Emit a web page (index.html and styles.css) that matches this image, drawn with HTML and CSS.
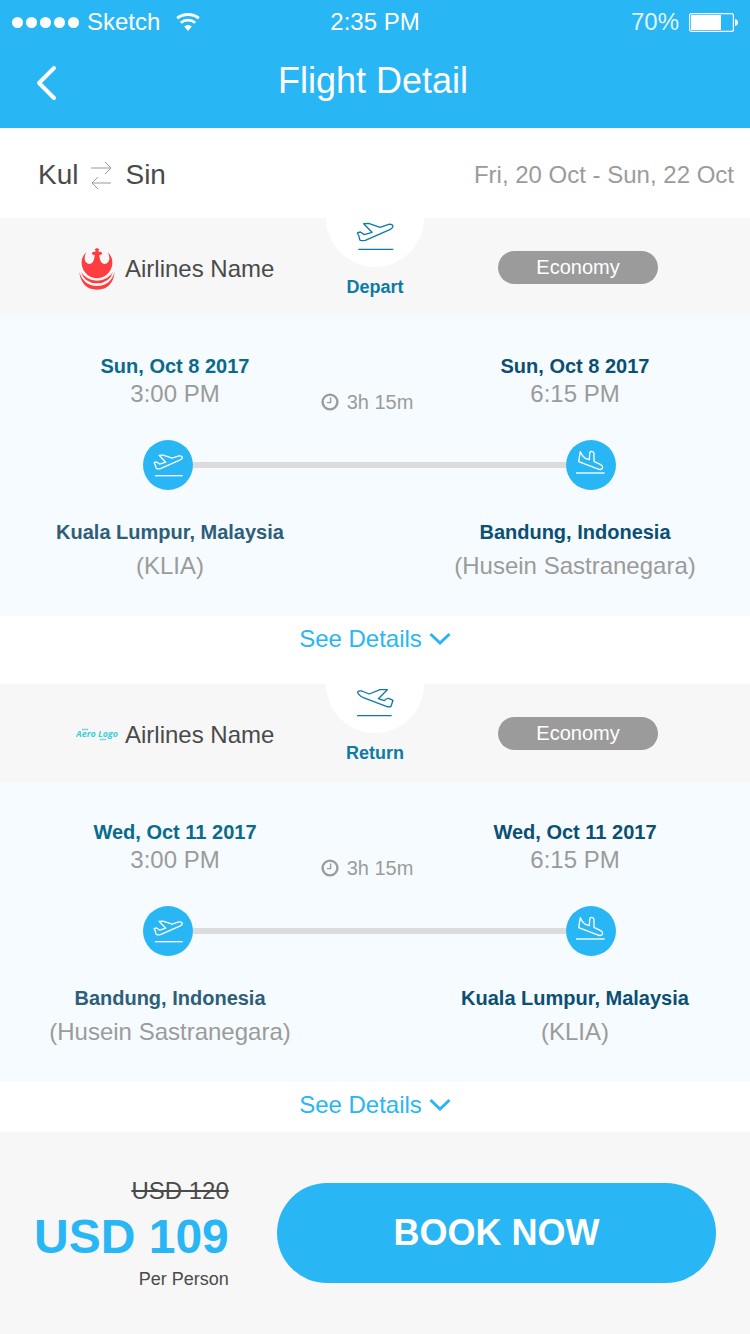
FILE: index.html
```html
<!DOCTYPE html>
<html lang="en">
<head>
<meta charset="utf-8">
<meta name="viewport" content="width=device-width, initial-scale=1">
<title>Flight Detail</title>
<link rel="stylesheet" href="styles.css">
</head>
<body>
<svg class="sprite" aria-hidden="true">
  <symbol id="takeoff" viewBox="140 36 117 87">
    <path d="M144 69L153 66L165 74L188 67L163 41L178 40L212 52L238 43Q249 42 251 48Q251 54 243 58L168 91Q152 94 151 88Q150 78 144 69Z"/>
    <path d="M147 118H252"/>
  </symbol>
  <symbol id="homeward" viewBox="138 23 117 87">
    <path d="M143 35Q147 31 155 32L178 41L210 28H232L205 55L223 61Q229 53 236 54L249 60L243 78Q238 81 229 78L160 52Q144 44 143 35Z"/>
    <path d="M141 106H245"/>
  </symbol>
  <symbol id="landing" viewBox="105 63 96 90">
    <path d="M121 68L116 98L177 121Q186 123 188 116Q188 110 182 107L162 97V74Q161 67 155 67Q149 67 149 74L148 92L136 88Q126 81 121 68Z"/>
    <path d="M108 132H194"/>
  </symbol>
  <symbol id="clock" viewBox="0 0 18 18">
    <circle cx="9" cy="9" r="7.4" stroke-width="2.4"/>
    <path d="M9.6 4.600V9.600H6" stroke-width="1.4"/>
  </symbol>
  <symbol id="chevron" viewBox="0 0 22 14">
    <path d="M1.5 2L11 11L20.5 2"/>
  </symbol>
</svg>

<header class="header">
  <div class="status">
    <div class="status-left">
      <span class="signal"><i></i><i></i><i></i><i></i><i></i></span>
      <span>Sketch</span>
      <svg class="wifi" viewBox="0 0 24 19" aria-hidden="true">
        <path d="M1.200 5.200C7.500 .4 16.500 .4 22.800 5.200" fill="none" stroke="#fff" stroke-width="3"/>
        <path d="M4.800 9.800C9 6.200 15 6.200 19.200 9.800" fill="none" stroke="#fff" stroke-width="2.800"/>
        <path d="M8.200 13.600C10.400 11.500 13.600 11.500 15.800 13.600L12 18Z" fill="#fff"/>
      </svg>
    </div>
    <time>2:35 PM</time>
    <div class="status-right">
      <span class="percent">70%</span>
      <svg class="battery" viewBox="0 0 49 19" aria-hidden="true">
        <rect x=".6" y=".6" width="43.800" height="17.800" rx="2" fill="none" stroke="#fff" stroke-width="1.200"/>
        <rect x="2" y="2" width="30" height="15" fill="#fff"/>
        <path d="M46 6Q49 6.500 49 9.500Q49 12.500 46 13Z" fill="#fff"/>
      </svg>
    </div>
  </div>
  <nav class="nav">
    <button class="back" type="button" aria-label="Back">
      <svg viewBox="0 0 24 36" aria-hidden="true"><path d="M20 3L5 18L20 33"/></svg>
    </button>
    <h1>Flight Detail</h1>
  </nav>
</header>

<main>
  <section class="route">
    <div class="cities">
      <span>Kul</span>
      <svg viewBox="0 0 21 27" aria-hidden="true"><path d="M0 6H20M14 0L20 6L14 12M20 21H1M7 15L1 21L7 27"/></svg>
      <span>Sin</span>
    </div>
    <p class="dates">Fri, 20 Oct - Sun, 22 Oct</p>
  </section>

  <div class="flights">
    <article class="flight">
      <header class="flight-head">
        <div class="airline">
          <svg class="airline-logo" viewBox="45 35 126 130" aria-hidden="true">
            <path fill="#fd3d40" d="M76 50C60 63 58 86 68 104C78 122 96 128 108 128C120 128 138 122 148 104C158 86 156 63 140 50C149 66 146 82 132 85C120 84 116 74 115 58Q122 59 124 53Q121 47 114 49L112 45L115 41L108 37L101 41L104 45L102 49Q95 47 92 53Q94 59 101 58C100 74 96 84 84 85C70 82 67 66 76 50Z"/>
            <path fill="#fd3d40" d="M60 108Q74 133 108 135Q142 133 156 108Q146 142 108 143Q70 142 60 108Z"/>
            <path fill="#fd3d40" d="M55 108Q66 149 108 151Q150 149 161 108Q156 160 108 162Q60 160 55 108Z"/>
          </svg>
          <span>Airlines Name</span>
        </div>
        <div class="direction">
          <div class="notch"><svg aria-hidden="true"><use href="#takeoff"/></svg></div>
          <h2>Depart</h2>
        </div>
        <div class="cabin"><span>Economy</span></div>
      </header>
      <div class="journey">
        <div class="row">
          <div class="stop from"><strong>Sun, Oct 8 2017</strong><span>3:00 PM</span></div>
          <div class="duration"><svg aria-hidden="true"><use href="#clock"/></svg><span>3h 15m</span></div>
          <div class="stop to"><strong>Sun, Oct 8 2017</strong><span>6:15 PM</span></div>
        </div>
        <div class="track">
          <span class="node"><svg class="icon-up" aria-hidden="true"><use href="#takeoff"/></svg></span>
          <span class="line"></span>
          <span class="node"><svg class="icon-down" aria-hidden="true"><use href="#landing"/></svg></span>
        </div>
        <div class="row">
          <div class="stop place origin"><strong>Kuala Lumpur, Malaysia</strong><span>(KLIA)</span></div>
          <div></div>
          <div class="stop place to"><strong>Bandung, Indonesia</strong><span>(Husein Sastranegara)</span></div>
        </div>
      </div>
      <button class="details" type="button">See Details <svg aria-hidden="true"><use href="#chevron"/></svg></button>
    </article>

    <article class="flight">
      <header class="flight-head">
        <div class="airline">
          <svg class="airline-logo" viewBox="0 0 42 44" role="img" aria-label="Aero Logo">
            <text x="0" y="24" class="aero">Aero Logo</text>
            <path d="M6 16.500H12M24 26.500H30" fill="none" stroke="#3fcfd5" stroke-width="1.500" stroke-dasharray="1.500 .7"/>
          </svg>
          <span>Airlines Name</span>
        </div>
        <div class="direction">
          <div class="notch"><svg aria-hidden="true"><use href="#homeward"/></svg></div>
          <h2>Return</h2>
        </div>
        <div class="cabin"><span>Economy</span></div>
      </header>
      <div class="journey">
        <div class="row">
          <div class="stop from"><strong>Wed, Oct 11 2017</strong><span>3:00 PM</span></div>
          <div class="duration"><svg aria-hidden="true"><use href="#clock"/></svg><span>3h 15m</span></div>
          <div class="stop to"><strong>Wed, Oct 11 2017</strong><span>6:15 PM</span></div>
        </div>
        <div class="track">
          <span class="node"><svg class="icon-up" aria-hidden="true"><use href="#takeoff"/></svg></span>
          <span class="line"></span>
          <span class="node"><svg class="icon-down" aria-hidden="true"><use href="#landing"/></svg></span>
        </div>
        <div class="row">
          <div class="stop place origin"><strong>Bandung, Indonesia</strong><span>(Husein Sastranegara)</span></div>
          <div></div>
          <div class="stop place to"><strong>Kuala Lumpur, Malaysia</strong><span>(KLIA)</span></div>
        </div>
      </div>
      <button class="details" type="button">See Details <svg aria-hidden="true"><use href="#chevron"/></svg></button>
    </article>
  </div>
</main>

<footer class="booking">
  <div class="price">
    <s>USD 120</s>
    <strong>USD 109</strong>
    <span>Per Person</span>
  </div>
  <button class="book" type="button">BOOK NOW</button>
</footer>
</body>
</html>
```
FILE: styles.css
```css
* {
  box-sizing: border-box;
}

body {
  margin: 0;
  background: #fff;
  color: #4a4a4a;
  font-family: "Liberation Sans", Arial, sans-serif;
  font-size: 24px;
  line-height: 28px;
}

h1, h2, p {
  margin: 0;
}

button {
  padding: 0;
  border: 0;
  background: none;
  font: inherit;
  cursor: pointer;
}

svg {
  display: block;
  flex: none;
}

.sprite {
  position: absolute;
  width: 0;
  height: 0;
}

/* Header */
.header {
  padding-bottom: 10px;
  background: #29b6f4;
  color: #fff;
}

.status,
.nav {
  display: grid;
  grid-template-columns: 1fr auto 1fr;
  align-items: center;
  padding: 0 12px;
}

.status {
  height: 44px;
}

.status-left,
.status-right {
  display: flex;
  align-items: center;
}

.status-left {
  gap: 8px;
}

.status-right {
  justify-content: flex-end;
  gap: 10px;
}

.signal {
  display: flex;
  gap: 3px;
}

.signal i {
  width: 11px;
  height: 11px;
  border-radius: 50%;
  background: #fff;
}

.wifi {
  width: 24px;
  height: 19px;
  margin-left: 8px;
}

.percent {
  opacity: 0.85;
}

.battery {
  width: 49px;
  height: 19px;
}

.nav {
  height: 74px;
  padding: 0 38px 0 34px;
}

.nav h1 {
  font-size: 36px;
  font-weight: 400;
  line-height: 44px;
}

.back {
  width: 24px;
  padding-top: 4px;
}

.back svg {
  width: 24px;
  height: 36px;
  fill: none;
  stroke: #fff;
  stroke-width: 4;
  stroke-linecap: round;
  stroke-linejoin: round;
}

/* Route summary */
.route {
  display: flex;
  align-items: center;
  justify-content: space-between;
  height: 90px;
  padding: 4px 16px 0 38px;
}

.cities {
  display: flex;
  align-items: center;
  gap: 13px;
  font-size: 28px;
}

.cities svg {
  width: 21px;
  height: 27px;
  fill: none;
  stroke: #9b9b9b;
}

.dates {
  color: #9b9b9b;
}

/* Flights */
.flights {
  display: grid;
  gap: 22px;
  padding-bottom: 4px;
}

.flight-head {
  display: grid;
  grid-template-columns: 1fr 98px 1fr;
  min-height: 98px;
  background: #f7f7f7;
}

.airline {
  display: flex;
  align-items: center;
  gap: 7px;
  padding: 4px 0 0 76px;
}

.airline-logo {
  width: 42px;
  height: 44px;
}

.aero {
  fill: #3fcfd5;
  font: italic 700 9px "Open Sans", sans-serif;
}

.direction {
  display: flex;
  flex-direction: column;
  align-items: center;
  gap: 8px;
}

.notch {
  display: flex;
  justify-content: center;
  width: 98px;
  height: 49px;
  padding-top: 4px;
  border-radius: 0 0 49px 49px;
  background: #fff;
}

.notch svg {
  width: 39px;
  height: 29px;
  fill: none;
  stroke: #0e7aa6;
  stroke-width: 4;
  stroke-linejoin: round;
}

.direction h2 {
  color: #0e7aa6;
  font-size: 18px;
  line-height: 24px;
}

.cabin {
  display: flex;
  align-items: center;
  padding-left: 74px;
}

.cabin span {
  width: 160px;
  border-radius: 17px;
  background: #9b9b9b;
  color: #fff;
  font-size: 20px;
  line-height: 33px;
  text-align: center;
}

.journey {
  display: grid;
  gap: 24px;
  padding: 36px 0 34px;
  background: #f5fbfe;
}

.row {
  display: grid;
  grid-template-columns: 27fr 13fr 27fr;
  padding: 0 40px;
}

.stop {
  display: flex;
  flex-direction: column;
  align-items: center;
  color: #9b9b9b;
  white-space: nowrap;
}

.stop strong {
  font-size: 20px;
}

.from strong {
  color: #0a6a8a;
}

.to strong {
  color: #0b4f72;
}

.origin {
  padding-right: 10px;
}

.origin strong {
  color: #2f5f78;
}

.place strong {
  line-height: 36px;
}

.place span {
  line-height: 32px;
}

.duration {
  display: flex;
  align-items: center;
  justify-content: center;
  gap: 8px;
  padding: 36px 16px 0 0;
  color: #9b9b9b;
  font-size: 20px;
  white-space: nowrap;
}

.duration svg {
  width: 18px;
  height: 18px;
  fill: none;
  stroke: #9b9b9b;
}

.track {
  display: flex;
  align-items: center;
  padding: 0 134px 0 143px;
}

.node {
  display: flex;
  align-items: center;
  justify-content: center;
  width: 50px;
  height: 50px;
  border-radius: 50%;
  background: #29b6f4;
}

.node svg {
  fill: none;
  stroke: #fff;
  stroke-width: 4;
  stroke-linejoin: round;
}

.node .icon-up {
  width: 31px;
  height: 23px;
  stroke-width: 5;
}

.icon-down {
  width: 32px;
  height: 30px;
}

.line {
  flex: 1;
  height: 6px;
  background: #dcdcdc;
}

.details {
  display: flex;
  align-items: center;
  justify-content: center;
  gap: 7px;
  width: 100%;
  height: 46px;
  color: #29b6f4;
}

.details svg {
  width: 22px;
  height: 14px;
  fill: none;
  stroke: #29b6f4;
  stroke-width: 3;
}

/* Booking bar */
.booking {
  display: flex;
  align-items: center;
  gap: 48px;
  padding: 45px 34px;
  background: #f7f7f7;
}

.price {
  display: flex;
  flex-direction: column;
  align-items: flex-end;
}

.price strong {
  color: #29b6f4;
  font-size: 48px;
  line-height: 64px;
}

.price span {
  font-size: 18px;
  line-height: 20px;
}

.book {
  flex: 1;
  height: 100px;
  border-radius: 50px;
  background: #29b6f4;
  color: #fff;
  font-size: 36px;
  font-weight: 700;
}
```
